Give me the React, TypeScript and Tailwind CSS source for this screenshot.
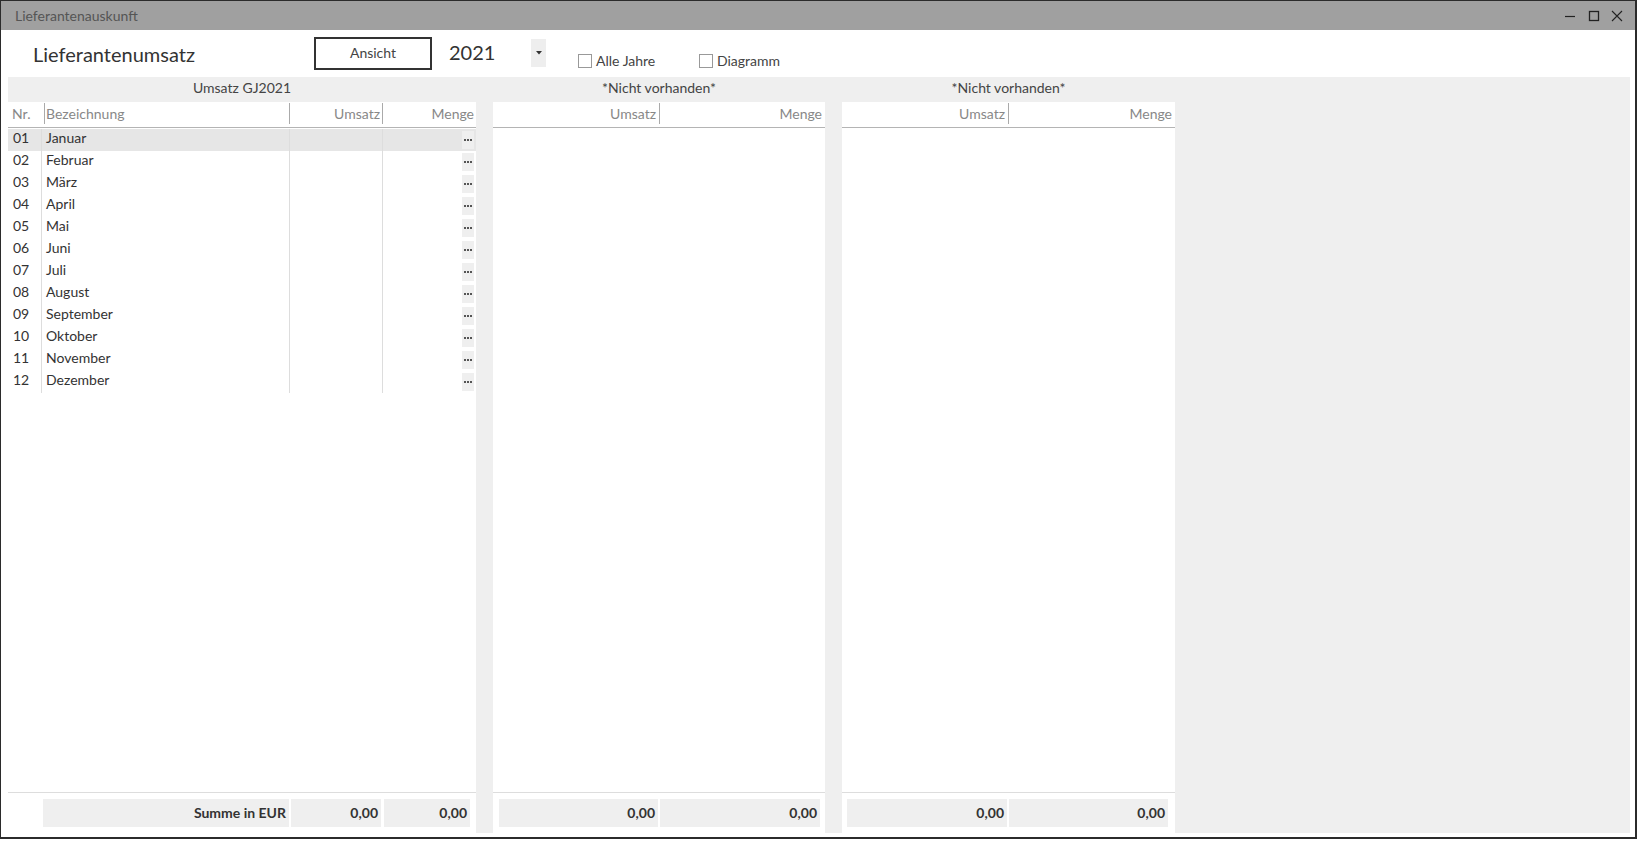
import React from 'react';

const months = [
  'Januar',
  'Februar',
  'März',
  'April',
  'Mai',
  'Juni',
  'Juli',
  'August',
  'September',
  'Oktober',
  'November',
  'Dezember',
];

const Dots = () => (
  <div className="w-[12px] h-[18px] bg-[#efefef] flex items-center justify-center gap-[1px]">
    <span className="w-[2px] h-[2px] bg-[#555]" />
    <span className="w-[2px] h-[2px] bg-[#555]" />
    <span className="w-[2px] h-[2px] bg-[#555]" />
  </div>
);

const Sep = () => <div className="w-px h-[21px] bg-[#aaa] shrink-0" />;

const Checkbox = ({ label }: { label: string }) => (
  <div className="flex items-center">
    <div className="w-[14px] h-[14px] border border-[#999] bg-white" />
    <span className="ml-[4px] text-[14px] text-[#444]">{label}</span>
  </div>
);

const FooterCell = ({ w, text }: { w: string; text: string }) => (
  <div className={`${w} h-[28px] bg-[#efefef] flex items-center justify-end pr-[3px] pb-[1px] text-[14px] text-[#333] font-bold`}>
    {text}
  </div>
);

const SidePanel = ({ width, leftPad, rightPad, cell1 }: { width: string; leftPad: string; rightPad: string; cell1: string }) => (
  <div className={`${width} flex flex-col shrink-0`}>
    <div className="h-[25px] flex items-center justify-center pb-[5px] text-[14px] text-[#444]">*Nicht vorhanden*</div>
    <div className="flex-1 bg-white flex flex-col">
      <div className="h-[26px] flex items-center pb-[3px] border-b border-[#b4b4b4] text-[14px] text-[#888]">
        <div className="w-[166px] text-right pr-[3px]">Umsatz</div>
        <Sep />
        <div className="flex-1 text-right pr-[3px]">Menge</div>
      </div>
      <div className="flex-1" />
      <div className={`border-t border-[#ddd] pt-[6px] pb-[6px] flex gap-[2px] ${leftPad} ${rightPad}`}>
        <FooterCell w={cell1} text="0,00" />
        <FooterCell w="flex-1" text="0,00" />
      </div>
    </div>
  </div>
);

export default function App() {
  return (
    <div className="w-[1637px] h-[839px] border-[#2b2b2b] border-t border-l border-r-2 border-b-2 flex flex-col bg-white font-['Lato',sans-serif]">
      {/* title bar */}
      <div className="h-[29px] bg-[#a0a0a0] flex items-center pl-[14px] shrink-0">
        <span className="text-[14px] text-[#555]">Lieferantenauskunft</span>
        <div className="ml-auto flex items-center mr-[12px]">
          <svg width="12" height="12" viewBox="0 0 12 12" className="mr-[12px]">
            <line x1="1" y1="6.5" x2="11" y2="6.5" stroke="#222" strokeWidth="1.2" />
          </svg>
          <svg width="12" height="12" viewBox="0 0 12 12" className="mr-[11px]">
            <rect x="1.5" y="1.5" width="9" height="9" fill="none" stroke="#222" strokeWidth="1.3" />
          </svg>
          <svg width="12" height="12" viewBox="0 0 12 12">
            <path d="M1 1 L11 11 M11 1 L1 11" stroke="#222" strokeWidth="1.1" />
          </svg>
        </div>
      </div>

      {/* toolbar */}
      <div className="h-[47px] flex shrink-0">
        <div className="ml-[32px] w-[281px] mt-[9px] text-[20px] text-[#333]">Lieferantenumsatz</div>
        <div className="mt-[7px] w-[118px] h-[33px] border-2 border-[#333] flex items-center justify-center pb-[3px] text-[14px] text-[#444]">
          Ansicht
        </div>
        <div className="ml-[17px] w-[82px] mt-[7px] text-[20px] text-[#333]">2021</div>
        <div className="mt-[9px] w-[15px] h-[28px] bg-[#eee] flex items-center justify-center">
          <svg width="6" height="4" viewBox="0 0 6 4">
            <path d="M0 0 L6 0 L3 3.5 Z" fill="#333" />
          </svg>
        </div>
        <div className="ml-[32px] w-[121px] mt-[20px]">
          <Checkbox label="Alle Jahre" />
        </div>
        <div className="mt-[20px]">
          <Checkbox label="Diagramm" />
        </div>
      </div>

      {/* grey content area */}
      <div className="flex-1 ml-[7px] mr-[5px] mb-[4px] bg-[#efefef] flex">
        {/* main panel */}
        <div className="w-[468px] flex flex-col shrink-0">
          <div className="h-[25px] flex items-center justify-center pb-[5px] text-[14px] text-[#444]">Umsatz GJ2021</div>
          <div className="flex-1 bg-white flex flex-col">
            <div className="h-[26px] flex items-center pb-[3px] border-b border-[#b4b4b4] text-[14px] text-[#888]">
              <div className="w-[36px] pl-[4px]">Nr.</div>
              <Sep />
              <div className="w-[244px] pl-[1px]">Bezeichnung</div>
              <Sep />
              <div className="w-[92px] text-right pr-[2px]">Umsatz</div>
              <Sep />
              <div className="flex-1 text-right pr-[2px]">Menge</div>
            </div>
            <div className="h-px" />
            <div className="flex flex-col">
              {months.map((m, i) => (
                <div key={m} className={`h-[22px] flex text-[14px] text-[#333] ${i === 0 ? 'bg-[#e6e6e6]' : ''}`}>
                  <div className="w-[34px] pl-[5px] pb-[5px] flex items-center border-r border-[#ddd]">
                    {String(i + 1).padStart(2, '0')}
                  </div>
                  <div className="w-[248px] pl-[4px] pb-[5px] flex items-center border-r border-[#ddd]">{m}</div>
                  <div className="w-[93px] border-r border-[#ddd]" />
                  <div className="flex-1 flex items-center justify-end pr-[2px]">
                    <Dots />
                  </div>
                </div>
              ))}
            </div>
            <div className="flex-1" />
            <div className="border-t border-[#ddd] pt-[6px] pb-[6px] pl-[35px] pr-[6px] flex">
              <FooterCell w="w-[246px]" text="Summe in EUR" />
              <div className="w-[2px]" />
              <FooterCell w="w-[90px]" text="0,00" />
              <div className="w-[3px]" />
              <FooterCell w="flex-1" text="0,00" />
            </div>
          </div>
        </div>

        <div className="w-[17px] shrink-0" />
        <SidePanel width="w-[332px]" leftPad="pl-[6px]" rightPad="pr-[5px]" cell1="w-[159px]" />
        <div className="w-[17px] shrink-0" />
        <SidePanel width="w-[333px]" leftPad="pl-[5px]" rightPad="pr-[7px]" cell1="w-[160px]" />
      </div>
    </div>
  );
}
